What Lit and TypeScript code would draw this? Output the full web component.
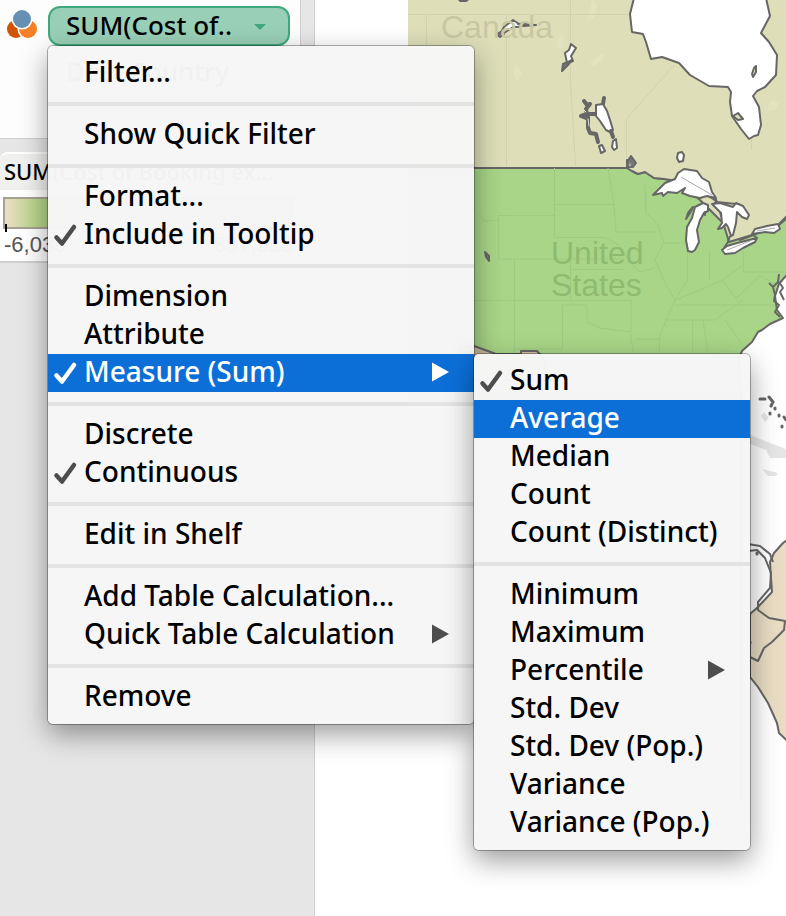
import { LitElement, html, css, svg, nothing } from "lit";
import { customElement, property } from "lit/decorators.js";

type Item = {
  label: string;
  checked?: boolean;
  submenu?: boolean;
  active?: boolean;
};

const FIELD_MENU: Item[][] = [
  [{ label: "Filter..." }],
  [{ label: "Show Quick Filter" }],
  [{ label: "Format..." }, { label: "Include in Tooltip", checked: true }],
  [
    { label: "Dimension" },
    { label: "Attribute" },
    { label: "Measure (Sum)", checked: true, submenu: true, active: true },
  ],
  [{ label: "Discrete" }, { label: "Continuous", checked: true }],
  [{ label: "Edit in Shelf" }],
  [
    { label: "Add Table Calculation..." },
    { label: "Quick Table Calculation", submenu: true },
  ],
  [{ label: "Remove" }],
];

const MEASURE_MENU: Item[][] = [
  [
    { label: "Sum", checked: true },
    { label: "Average", active: true },
    { label: "Median" },
    { label: "Count" },
    { label: "Count (Distinct)" },
  ],
  [
    { label: "Minimum" },
    { label: "Maximum" },
    { label: "Percentile", submenu: true },
    { label: "Std. Dev" },
    { label: "Std. Dev (Pop.)" },
    { label: "Variance" },
    { label: "Variance (Pop.)" },
  ],
];

@customElement("context-menu")
export class ContextMenu extends LitElement {
  @property({ attribute: false }) groups: Item[][] = [];

  static styles = css`
    :host {
      display: block;
      box-sizing: border-box;
      padding: 8px 0;
      border-radius: 5px;
      background: rgba(246, 246, 246, 0.98);
      box-shadow: 0 0 0 1px rgba(0, 0, 0, 0.3), 0 10px 28px rgba(0, 0, 0, 0.4);
    }
    .item {
      display: flex;
      box-sizing: border-box;
      width: 100%;
      height: 38px;
      margin: 0;
      padding: 0 24px 4px 4px;
      border: 0;
      background: none;
      color: #000;
      font: 500 28px/34px "Noto Sans", "Open Sans", sans-serif;
      text-align: left;
      white-space: nowrap;
    }
    .active {
      background: #0c6fd8;
      color: #fff;
    }
    .mark {
      flex: none;
      width: 32px;
      height: 38px;
      color: #4d4d4d;
    }
    .arrow {
      flex: none;
      width: 18px;
      height: 38px;
      color: #4d4d4d;
    }
    .active .mark,
    .active .arrow {
      color: #fff;
    }
    .label {
      flex: 1;
    }
    .rule {
      height: 4px;
      margin: 10px 0;
      border: 0;
      background: #e3e3e3;
    }
  `;

  private renderItem(item: Item) {
    return html`<button
      class="item ${item.active ? "active" : ""}"
      role=${item.checked ? "menuitemcheckbox" : "menuitem"}
      aria-checked=${item.checked ? "true" : nothing}
      aria-haspopup=${item.submenu ? "menu" : nothing}
    >
      <svg class="mark" viewBox="0 0 32 38" aria-hidden="true">
        ${item.checked
          ? svg`<path d="M4.500 21.500 L10 27.500 L22 11" fill="none" stroke="currentColor" stroke-width="4.500" stroke-linecap="round" stroke-linejoin="round"/>`
          : nothing}
      </svg>
      <span class="label">${item.label}</span>
      ${item.submenu
        ? html`<svg class="arrow" viewBox="0 0 18 38" aria-hidden="true">
            <path d="M0 8.500 L17 18 L0 27.500 Z" fill="currentColor" />
          </svg>`
        : nothing}
    </button>`;
  }

  render() {
    return html`<div role="menu">
      ${this.groups.map(
        (group, i) => html`${i ? html`<hr class="rule" />` : nothing}${group.map(
          (item) => this.renderItem(item)
        )}`
      )}
    </div>`;
  }
}

@customElement("world-map")
export class WorldMap extends LitElement {
  static styles = css`
    :host {
      display: block;
      overflow: hidden;
    }
    .map {
      display: block;
      width: 378px;
      height: 800px;
    }
    .country {
      stroke: #666;
      stroke-width: 2;
      stroke-linejoin: round;
    }
    .canada { fill: #dedfb9; }
    .usa { fill: #a8d587; }
    .south { fill: #e9dcc3; }
    .mexico { fill: #cfc3a5; }
    .water {
      fill: #fff;
      stroke: #666;
      stroke-width: 2;
      stroke-linejoin: round;
    }
    .islet {
      fill: #777;
      stroke: #666;
      stroke-width: 2;
      stroke-linejoin: round;
    }
    .border-line {
      fill: none;
      stroke: #666;
      stroke-width: 2;
      stroke-linejoin: round;
    }
    .island {
      fill: #dedfb9;
      stroke: #666;
      stroke-width: 2;
      stroke-linejoin: round;
    }
    .channel {
      fill: none;
      stroke: #666;
      stroke-width: 4;
      stroke-linejoin: round;
      stroke-linecap: round;
    }
    .channel-light {
      fill: none;
      stroke: #ddd;
      stroke-width: 1;
      stroke-linecap: round;
    }
    .fine {
      fill: none;
      stroke: #aaa;
      stroke-width: 1;
    }
    .pale { fill: #e2e3bf; }
    .states {
      fill: none;
      stroke: #9fcb80;
      stroke-width: 1;
    }
    .provinces {
      fill: none;
      stroke: #d2d3ae;
      stroke-width: 1;
    }
    .shade { fill: #e6e6e6; }
    .dots {
      fill: none;
      stroke: #666;
      stroke-width: 3;
      stroke-linecap: round;
    }
    .name {
      font: 32px "Liberation Sans", Arial, sans-serif;
    }
    .name-ca { fill: #c8c9a2; }
    .name-us { fill: #8fbb70; }
    .name-pe { fill: #cdbfa3; }
  `;

  render() {
    return html`<svg class="map" viewBox="408 0 378 800" role="img" aria-label="Map">
      <rect class="canada" x="408" y="0" width="378" height="230" />
      <path class="pale" d="M592 0l5 6-3 12-7 3 3-12zM558 38l6-3-2 14-6-2zM603 52l-14 12 5 2 10-8zM516 63l6 10-5 9-4-9zM770 100l9 2-3 8-9 1z" />
      <path class="provinces" d="M408 14.500H632M426.500 14.500V50M506.500 14.500V166M570.500 0V80L575.500 166M674 65L626.500 119V158M751.500 137V188L760 200" />

      <path class="country usa" d="M400 168H627L632 171 638 174 645 172 654 178 664 179 677 181 700 200 740 240 761 232 800 208V400H400Z" />
      <path class="states" d="M554.500 168V237M478 212L484 221 498 220M498.500 215V259H624M498.500 215.500H554M554.500 204.500H614L608 168M614 204L616 232H655M554.500 237.500H605L619 245M514.500 259V370M570.500 259V300M570.500 269.500H624M460 300.500H631M562.500 305H587V322L600 328 630 332M562.500 305V349H514M619 245L632 265 640 272 655 268M631 300V338L636 370M636 339H660M645 185L646 212 658 225 664 243 655 260 666 285 675 300 660 335 659 356M664 243H689M687.500 251V280L675 300M709.500 251V280M743.500 251V272H786M675 305H786M665 320H715M692.500 320V353M703 320L708 353M725 320L748 353M675 300L700 290 722 280 743 265M722 280L736 298 760 276 786 290M715 320L743 300" />

      <path class="country water" d="M800 262L784 278 779 284 775 296 777 310 783 318 770 324 762 330 758 332 752 342 742 351 739 358 741 400V900H900V262Z" />
      <path class="country canada" d="M627 168L632 171 638 174 645 172 654 178 664 179 677 181 712 198 717 202 729 242 752 235 757 229 779 225 800 207V160H627Z" />
      <rect class="canada" x="628" y="150" width="158" height="18" />
      <path class="border-line" d="M779 274l-1 8-5 5-4-4M773 287l2 8-1 6 5 4-4 7 5 5M779 282l4 6-3 4 4 8" />

      <path class="water" d="M634 -2L630 14 632 32 643 34 646 42 651 59 662 57 679 63 690 75 709 86 728 87 731 92 730 102 732 116 741 129 749 139 754 136 758 135 761 125 759 107 753 96 757 91 765 87 776 75 777 55 769 42 761 33 770 16 766 -2Z" />
      <path class="island" d="M752 74l2-6 2-2 0 6-3 5zM733 116l5-3 5 6-5 1z" />
      <path class="water" d="M500 34L504 27 513 20 519 24 526 23 520 27 513 27 504 33Z" />
      <path class="islet" d="M497 34l6-3 1 3-4 3zM458 -2h12l-4 3h-6zM518 24l18 1-12 1z" />
      <path class="water" d="M571 44L576 48 571 56 573 61 567 63 565 53 569 50Z" />
      <path class="islet" d="M563 64l5-2 4-2-5 6-5 5z" />
      <path class="channel" d="M584 101l3 4 3-1-4 5 1 5-6 2 5 2M587 114l8 0M588 117l0 11 2 5 6 1 2 8M604 98l-1 6" />
      <path class="channel-light" d="M584 110l2 2M588 119l1 7" />
      <path class="water" d="M596 105L603 104 607 111 610 120 613 130 610 132 606 130 600 121 596 116Z" />
      <path class="channel" d="M611 131l2 6" />
      <path class="water" d="M613 141l3-2 1 9-3 2-2-3zM599 146l3-1 3 6-4 2zM678 153l4-1 2 3-1 6-4 1-2-4z" />
      <path class="islet" d="M627 162l4-6 5 7-3 4-6 0z" />
      <path class="channel-light" d="M630 164v2" />

      <path class="water" d="M653 195L659 189 665 183 675 179 678 173 684 169 697 171 702 178 709 182 712 192 716 198 707 196 700 198 690 196 682 193 685 188 677 193 668 192 663 196 662 193Z" />
      <path class="fine" d="M681 177L712 195M722 207L728 212 731 232" />
      <path class="border-line" d="M715 197L717 202 736 204M714 203H722" />
      <path class="water" d="M708 205L703 203 695 207 692 218 687 227 686 240 688 251 692 252 695 250 699 242 697 230 700 220 704 213 708 211Z" />
      <path class="islet" d="M693 207l-5 6-2 6 4-6zM705 212l0 3-1-1z" />
      <path class="water" d="M712 204L720 203 733 207 736 203 743 206 749 215 747 219 742 217 737 212 736 223 733 235 731 236 728 227 726 224 722 228 718 229 722 223 721 213Z" />
      <path class="water" d="M722 250L727 246 737 243 757 238 755 242 743 248 735 253 725 254ZM752 234L755 229 767 226 778 224 780 229 774 233 765 232Z" />
      <path class="fine" d="M727 250L750 241M757 231L775 228" />
      <path class="border-line" d="M730 236L728 242 724 248M779 224L787 216M752 234L757 238" />
      <path class="islet" d="M485 252l4 4 0 5-3-4z" />

      <path class="country mexico" d="M474 346L496 354 521 354V351H537L545 360V380H460V346Z" />
      <path class="shade" d="M750 435L765 441 786 449V458H770L766 450 750 444ZM762 469l16 4-2 3-8 0zM764 412l5 6-4 4-4-6z" />
      <path class="dots" d="M760 399h5M769 397l4 5-2 4M775 408v1M770 413v1M779 415v1M782 426v1M784 417l2 3" />
      <path class="country south" d="M800 530L783 543 774 553 770 562 771 578 772 592 758 607 750 614V677L758 687 768 703 777 723 779 733 800 753Z" />
      <path class="border-line" d="M748 544L760 546 770 554 773 562M748 551L757 550 765 558 771 573 770 588 758 602 758 610 769 618 785 621 784 630 772 642 764 648 758 661 750 657" />
      <path class="dots" d="M757 553v1M750 642v1" />

      <text class="name name-ca" x="441" y="38">Canada</text>
      <text class="name name-us" x="551" y="264">United</text>
      <text class="name name-us" x="551" y="296">States</text>
    </svg>`;
  }
}

@customElement("app-root")
export class AppRoot extends LitElement {
  static styles = css`
    :host {
      display: block;
      position: relative;
      min-height: 100vh;
      overflow: hidden;
      background: #fff;
    }
    .workspace {
      display: flex;
      min-height: 100vh;
    }
    .sidebar {
      flex: none;
      box-sizing: border-box;
      width: 315px;
      border-right: 1px solid #cfcfcf;
      background: #e6e6e6;
    }
    .marks {
      box-sizing: border-box;
      display: flex;
      align-items: flex-start;
      width: 301px;
      height: 139px;
      padding: 6px 10px 0 6px;
      border-right: 1px solid #cfcfcf;
      border-bottom: 1px solid #cfcfcf;
      background: #fdfdfd;
    }
    .color-icon {
      flex: none;
      width: 32px;
      height: 34px;
      margin-right: 10px;
    }
    .pills {
      display: flex;
      flex: 1;
      flex-direction: column;
      gap: 6px;
    }
    .pill {
      box-sizing: border-box;
      display: flex;
      align-items: center;
      justify-content: space-between;
      height: 40px;
      margin: 0;
      padding: 0 21px 2px 16px;
      border: 2px solid #3fa87c;
      border-radius: 12px;
      background: #99cfb7;
      color: #000;
      font: 500 26px/34px "Noto Sans", "Open Sans", sans-serif;
      white-space: nowrap;
    }
    .pill.dimension {
      border-color: #b9dbe0;
      background: #dcedf0;
    }
    .caret {
      width: 14px;
      height: 7px;
      margin-top: 4px;
    }
    .legend {
      margin-top: 13px;
      width: 301px;
      border-radius: 8px 8px 0 0;
      border-bottom: 2px solid #cfcfcf;
      background: #fff;
    }
    .legend-title {
      box-sizing: border-box;
      height: 38px;
      margin: 0;
      padding: 0 4px;
      border-top: 2px solid #fff;
      border-radius: 8px 8px 0 0;
      background: #f0f0ef;
      font: 500 22px/34px "Noto Sans", "Open Sans", sans-serif;
      white-space: nowrap;
    }
    .ramp {
      height: 28px;
      margin: 7px 8px 0 3px;
      border: 2px solid #a5a294;
      background: linear-gradient(90deg, #ecdcc5, #bcd68f 28px, #a8d587 60px);
    }
    .tick {
      width: 2px;
      height: 8px;
      margin: -5px 0 0 5px;
      background: #000;
    }
    .range {
      display: flex;
      justify-content: space-between;
      height: 29px;
      padding: 0 8px 0 4px;
      color: #555;
      font: 22px/26px "Liberation Sans", Arial, sans-serif;
    }
    .view {
      flex: 1;
      min-width: 0;
      padding-left: 93px;
    }
    .field-menu {
      position: absolute;
      top: 46px;
      left: 48px;
      width: 426px;
    }
    .measure-menu {
      position: absolute;
      top: 354px;
      left: 474px;
      width: 276px;
    }
  `;

  render() {
    return html`
      <div class="workspace">
        <aside class="sidebar">
          <section class="marks">
            <svg class="color-icon" viewBox="0 0 32 34" aria-hidden="true">
              <circle cx="10" cy="23" r="9" fill="#cf5504" />
              <circle cx="22" cy="23" r="10.500" fill="#fdfdfd" />
              <circle cx="22" cy="23" r="9" fill="#f58026" />
              <circle cx="16" cy="13" r="10.500" fill="#fdfdfd" />
              <circle cx="16" cy="13" r="9" fill="#668fb1" />
            </svg>
            <div class="pills">
              <button class="pill" aria-haspopup="menu">
                SUM(Cost of..
                <svg class="caret" viewBox="0 0 14 7" aria-hidden="true">
                  <path d="M1 0H13L7 6Z" fill="#3fa87c" />
                </svg>
              </button>
              <button class="pill dimension">Dest Country</button>
            </div>
          </section>
          <section class="legend">
            <h2 class="legend-title">SUM(Cost of Booking ex...</h2>
            <div class="ramp"></div>
            <div class="tick"></div>
            <div class="range"><span>-6,035</span><span>887,318</span></div>
          </section>
        </aside>
        <main class="view"><world-map></world-map></main>
      </div>
      <context-menu class="field-menu" .groups=${FIELD_MENU}></context-menu>
      <context-menu class="measure-menu" .groups=${MEASURE_MENU}></context-menu>
    `;
  }
}
